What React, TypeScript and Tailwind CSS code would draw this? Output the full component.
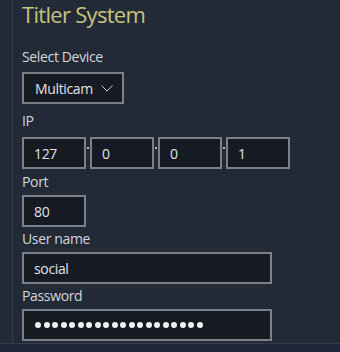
const font = { fontFamily: '"Open Sans", "Noto Sans", sans-serif' };

function Label({ text, className }: { text: string; className?: string }) {
  return (
    <div className={`h-[20px] leading-[20px] text-[14px] tracking-[-0.35px] text-[#d4d6da] ${className ?? ""}`}>
      {text}
    </div>
  );
}

function Field({
  value,
  width,
  className,
}: {
  value: string;
  width: string;
  className?: string;
}) {
  return (
    <div
      className={`${width} h-[32px] border-2 border-[#7c8088] bg-[#161a22] pl-[10px] flex items-center text-[14px] tracking-[-0.35px] text-[#e2e3e6] ${className ?? ""}`}
    >
      {value}
    </div>
  );
}

export default function App() {
  const ip = ["127", "0", "0", "1"];

  return (
    <div style={font} className="w-[340px] h-[352px] bg-[#222a38] flex flex-col overflow-hidden">
      <div className="flex-1 flex">
        <div className="w-[12px] shrink-0" />
        <div className="border-l border-[#323a4c] pl-[9px] flex flex-col">
          {/* Header */}
          <h1 className="h-[28px] leading-[28px] text-[22px] tracking-[-0.7px] text-[#c8c27c]">
            Titler System
          </h1>

          {/* Device */}
          <Label text="Select Device" className="mt-[19px]" />
          <div className="mt-[5px] w-[102px] h-[32px] border-2 border-[#7c8088] bg-[#161a22] pl-[11px] pr-[9px] flex items-center justify-between text-[14px] tracking-[-0.35px] text-[#e2e3e6]">
            <span>Multicam</span>
            <svg width="12" height="7" viewBox="0 0 12 7" fill="none">
              <path d="M0.5 0.5 L6 6 L11.5 0.5" stroke="#c4c6ca" strokeWidth="1" />
            </svg>
          </div>

          {/* IP */}
          <Label text="IP" className="mt-[7px]" />
          <div className="mt-[6px] flex items-start">
            {ip.map((part, i) => (
              <div key={i} className="flex items-start">
                {i > 0 && (
                  <div className="w-[4px] flex justify-center pt-[10px]">
                    <div className="w-[2px] h-[2px] bg-[#b8bbc0]" />
                  </div>
                )}
                <Field value={part} width="w-[64px]" />
              </div>
            ))}
          </div>

          {/* Port */}
          <Label text="Port" className="mt-[3px]" />
          <Field value="80" width="w-[64px]" className="mt-[3px]" />

          {/* Credentials */}
          <Label text="User name" className="mt-[2px]" />
          <Field value="social" width="w-[250px]" className="mt-[3px]" />
          <Label text="Password" className="mt-[2px]" />
          <div className="mt-[3px] w-[250px] h-[32px] border-2 border-[#7c8088] bg-[#161a22] pl-[11px] flex items-center gap-[2.5px]">
            {Array.from({ length: 20 }).map((_, i) => (
              <div key={i} className="w-[6px] h-[6px] rounded-full bg-[#f2f2f2]" />
            ))}
          </div>
        </div>
      </div>
      <div className="h-[9px] shrink-0 border-t border-[#323a4c] bg-[#20273a]" />
    </div>
  );
}
